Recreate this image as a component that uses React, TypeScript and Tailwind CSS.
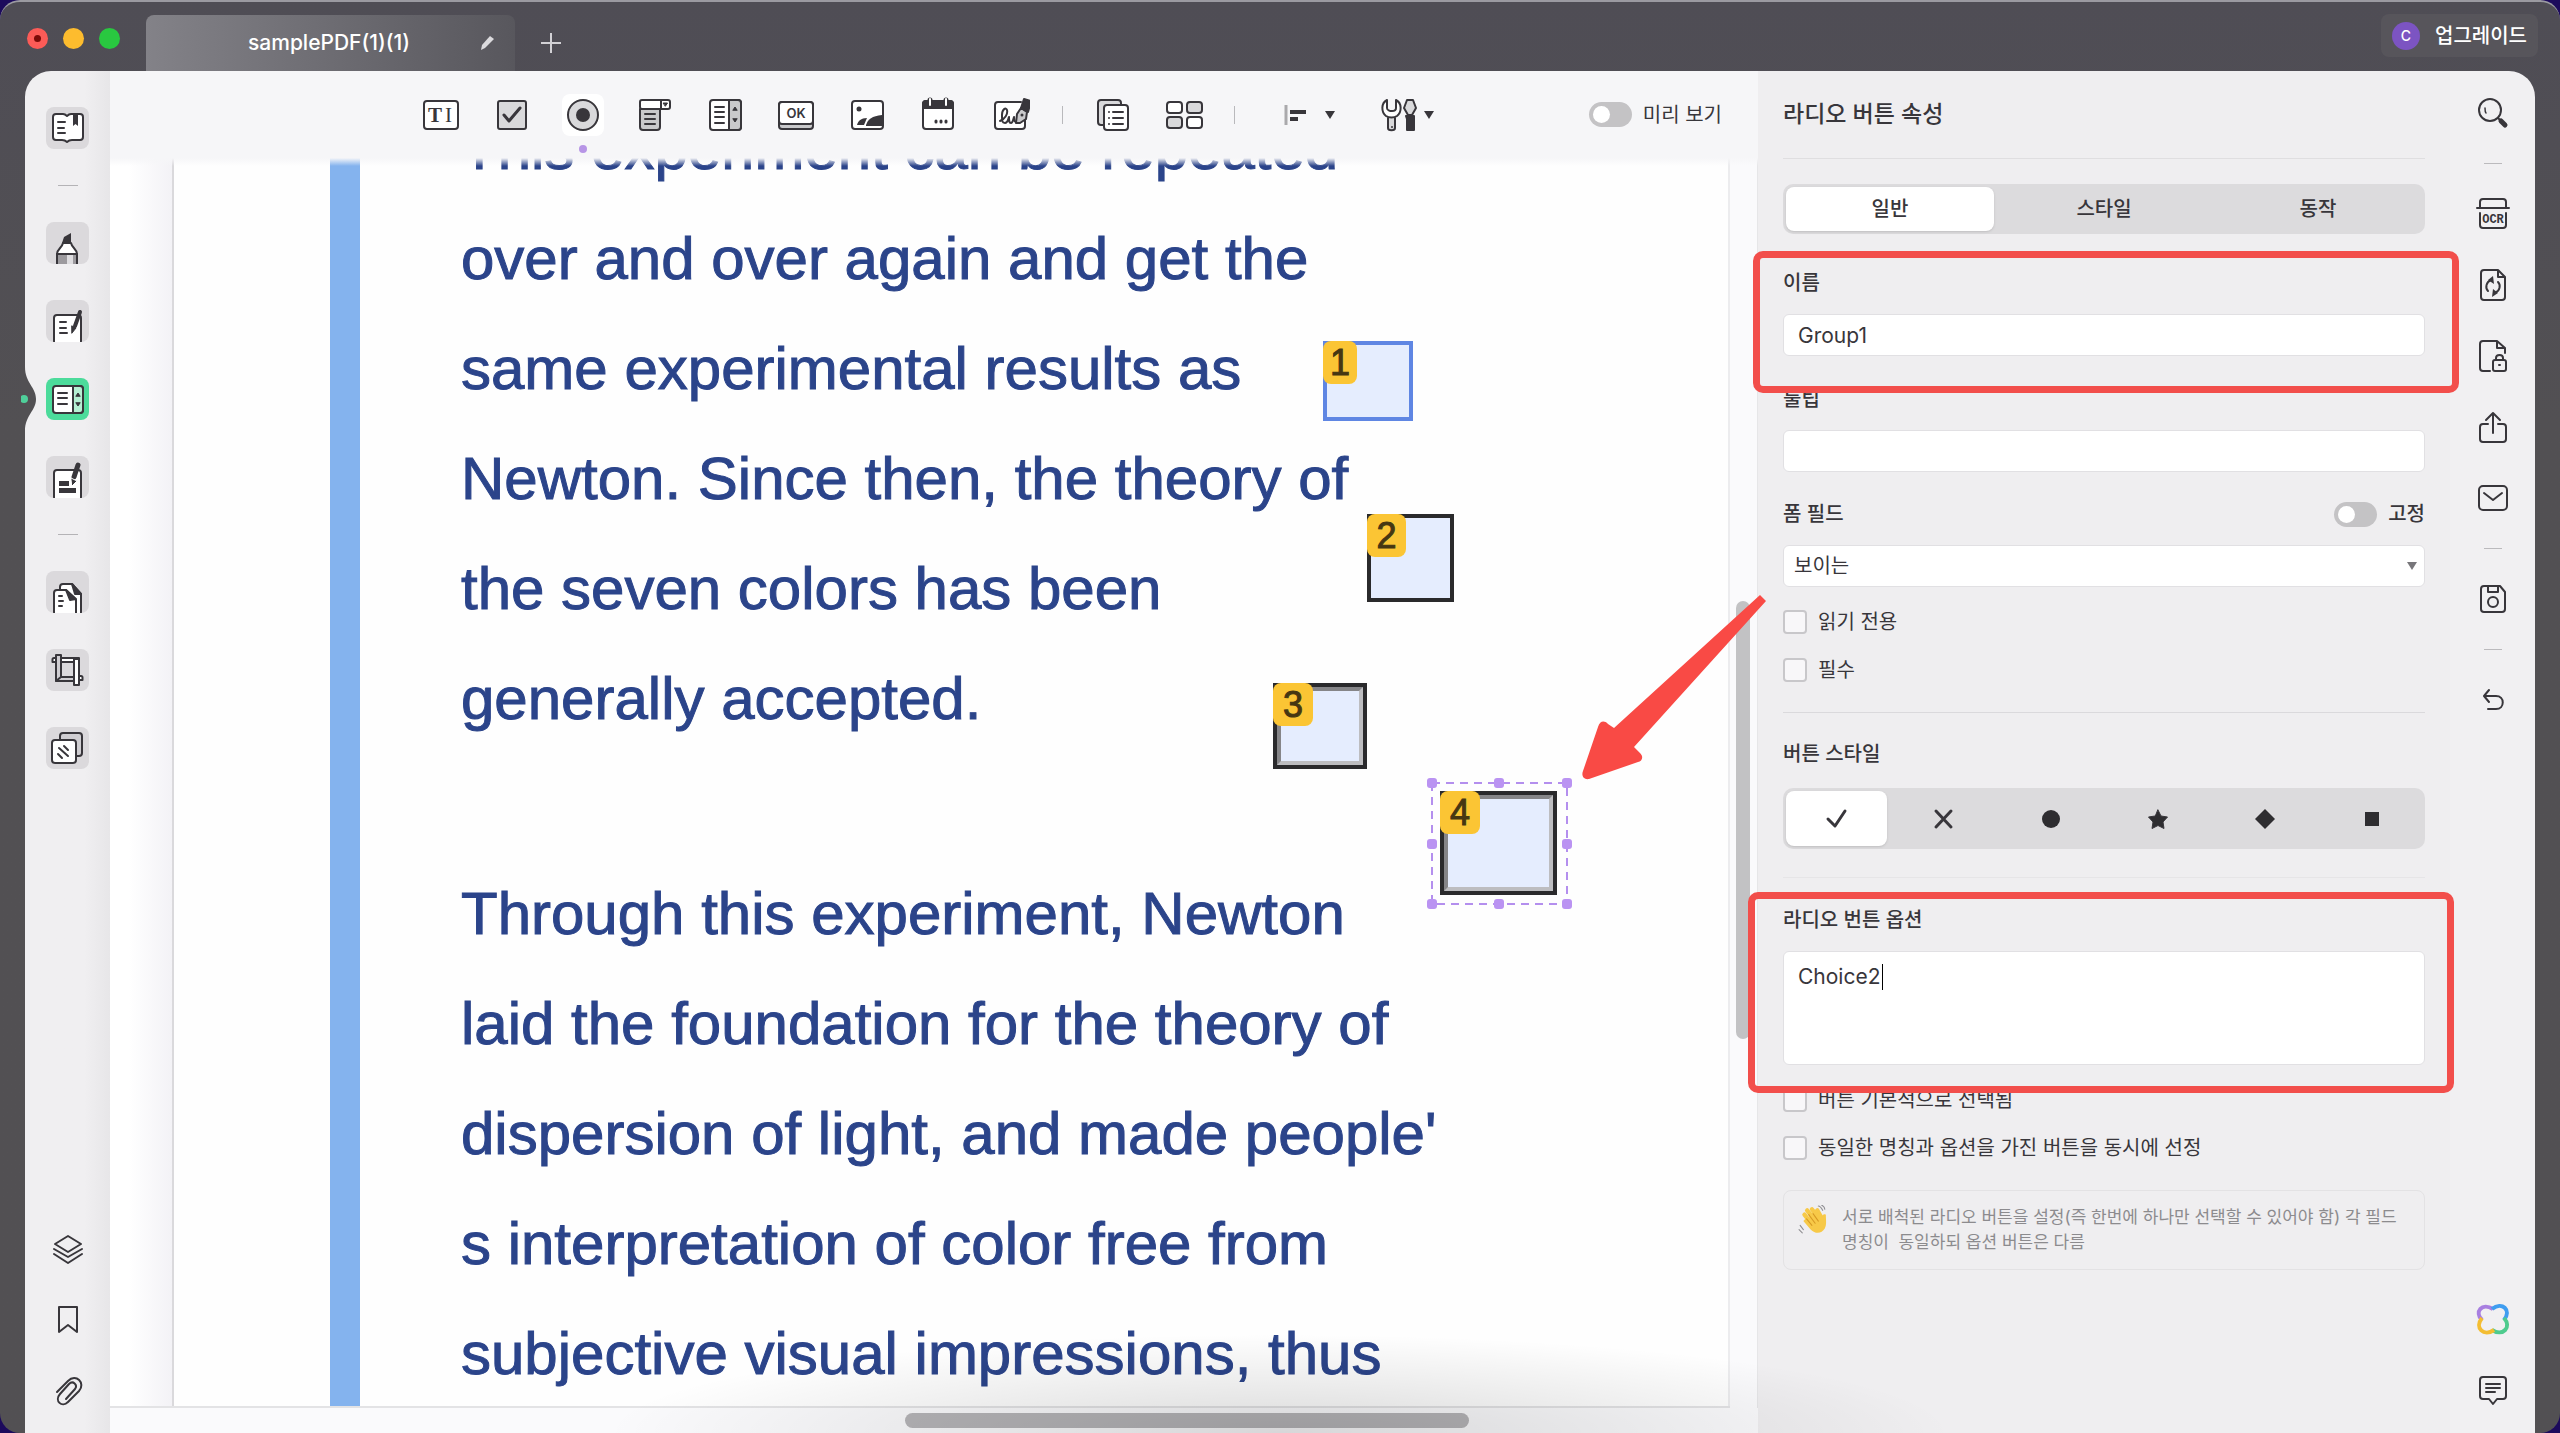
import { useState } from "react";
import type { ReactNode } from "react";

const INK = "#38363b";

const paragraphs = [
  ["This experiment can be repeated", "over and over again and get the", "same experimental results as", "Newton. Since then, the theory of", "the seven colors has been", "generally accepted."],
  ["Through this experiment, Newton", "laid the foundation for the theory of", "dispersion of light, and made people'", "s interpretation of color free from", "subjective visual impressions, thus"],
];

const tabs = ["일반", "스타일", "동작"];

function Icon({ children, size = 42, box = 42 }: { children: ReactNode; size?: number; box?: number }) {
  return <svg width={size} height={size} viewBox={`0 0 ${box} ${box}`} fill="none" stroke={INK} strokeWidth="2" strokeLinecap="round" strokeLinejoin="round" className="shrink-0" aria-hidden="true">{children}</svg>;
}

/* form toolbar */

const tools: { name: string; icon: ReactNode }[] = [
  { name: "Text field", icon: <><rect x="4" y="7" width="34" height="28" rx="3" fill="#fff" /><text x="8" y="28" fontFamily="Liberation Serif, serif" fontWeight="700" fontSize="21" fill={INK} stroke="none">T</text><text x="25" y="28" fontFamily="Liberation Serif, serif" fontSize="21" fill={INK} stroke="none">I</text></> },
  { name: "Check box", icon: <><rect x="7" y="7" width="28" height="28" rx="2" fill="#d9d9db" /><path d="M13 21l5 6 11-13" strokeWidth="3" /></> },
  { name: "Radio button", icon: <><circle cx="21" cy="21" r="15" fill="#d9d9db" /><circle cx="21" cy="21" r="7" fill={INK} stroke="none" /></> },
  { name: "Combo box", icon: <><path d="M7 15h20v18a3 3 0 0 1-3 3H10a3 3 0 0 1-3-3z" fill="#c9c9cb" /><rect x="7" y="6" width="30" height="9" rx="2" fill="#fff" /><path d="M28 6v9M12 20h10M12 25h10M12 30h10" /><path d="M30.500 9h4l-2 3z" fill={INK} strokeWidth="1" /></> },
  { name: "List box", icon: <><rect x="6" y="6" width="31" height="30" rx="3" fill="#fff" /><path d="M25 6h9a3 3 0 0 1 3 3v24a3 3 0 0 1-3 3h-9z" fill="#c9c9cb" /><path d="M11 13h9M11 18h9M11 23h9M11 29h9" /><path d="M29 16l2-3 2 3zM29 25l2 3 2-3z" fill={INK} strokeWidth="1" /></> },
  { name: "Push button", icon: <><rect x="4" y="8" width="34" height="27" rx="3" fill="#c9c9cb" /><path d="M4 11a3 3 0 0 1 3-3h28a3 3 0 0 1 3 3v16a3 3 0 0 1-3 3H7a3 3 0 0 1-3-3z" fill="#fff" /><text x="21" y="24" textAnchor="middle" fontFamily="Inter, sans-serif" fontWeight="600" fontSize="13" fill={INK} stroke="none">OK</text></> },
  { name: "Image field", icon: <><rect x="6" y="7" width="31" height="28" rx="3" fill="#fff" /><circle cx="13" cy="15" r="2.500" fill={INK} stroke="none" /><path d="M11 31c1-4 4-7 10-7l-3 7z" fill={INK} stroke="none" /><path d="M20 31c2-6 6-9 16-10v11H20z" fill={INK} stroke="none" /></> },
  { name: "Date field", icon: <><rect x="6" y="7" width="30" height="28" rx="3" fill="#fff" /><path d="M6 10a3 3 0 0 1 3-3h24a3 3 0 0 1 3 3v4H6z" fill={INK} /><path d="M13 6v5M29 6v5" strokeWidth="5" /><path d="M13 5v6M29 5v6" stroke="#fff" strokeWidth="2" /><path d="M19 27v1M24 27v1M29 27v1" strokeWidth="3" /></> },
  { name: "Signature field", icon: <><path d="M33 8H10a3 3 0 0 0-3 3v21a3 3 0 0 0 3 3h24a3 3 0 0 0 3-3v-9" fill="#fff" /><path d="M12 27c5-2 8-7 7-11-1-3-5-1-5 5s0 8 3 8 3-4 4-6c0 4 0 6 2 6s2-3 3-6c0 4 1 6 4 6" /><path d="M28 29l1-9 4-6 6 4-1 7-6 4z" fill="#c9c9cb" /><path d="M33 14l3-9 7 2-3 11z" fill={INK} /><circle cx="34" cy="21" r="1.500" fill={INK} stroke="none" /></> },
];

const groupTools: { name: string; icon: ReactNode }[] = [
  { name: "Duplicate", icon: <><rect x="6" y="6" width="23" height="25" rx="3" fill="#d9d9db" /><rect x="12" y="11" width="24" height="25" rx="3" fill="#fff" /><path d="M21 18h10M21 24h10M21 30h10M17 18h0M17 24h0M17 30h0" /></> },
  { name: "Distribute", icon: <><rect x="4" y="8" width="15" height="11" rx="3" fill="#fff" /><rect x="24" y="8" width="15" height="11" rx="3" fill="#d9d9db" /><rect x="4" y="23" width="15" height="11" rx="3" fill="#d9d9db" /><rect x="24" y="23" width="15" height="11" rx="3" fill="#fff" /></> },
];

/* left rail */

const bookIcon = <><path d="M7 10a3 3 0 0 1 3-3h7c2 0 3 1 4 2 1-1 2-2 4-2h9a3 3 0 0 1 3 3v20a3 3 0 0 1-3 3h-8c-2 0-3 0-5 2-2-2-3-2-5-2h-6a3 3 0 0 1-3-3z" fill="#fff" /><path d="M12 15h7M12 21h6M12 26h7" /><path d="M27 7h5v12l-2.500-2-2.500 2z" fill={INK} stroke="none" /></>;
const highlightIcon = <><path d="M16 21l2-6 7-4v10z" fill={INK} stroke="none" /><path d="M17 21h8c1 5 6 6 6 11v12H11V32c0-5 5-6 6-11z" fill="#fff" /><path d="M11 32h20v12H11z" fill="#9c9a9e" /><path d="M21 33h6v11h-6z" fill="#dedde0" stroke="none" /></>;
const noteIcon = <><path d="M8 44V18a3 3 0 0 1 3-3h21a3 3 0 0 1 3 3v26" fill="#fff" /><path d="M14 22h6M14 28h6M14 33h7" /><path d="M34 12l-5 14" strokeWidth="4" /><path d="M26 26l4 2-4 5z" fill={INK} strokeWidth="1" /></>;
const formIcon = <><rect x="7" y="8" width="30" height="27" rx="3" fill="#fff" /><path d="M27 8h7a3 3 0 0 1 3 3v21a3 3 0 0 1-3 3h-7z" fill="#b5efd3" /><path d="M12 15h9M12 20h9M12 26h9" /><path d="M30 18l2-3 2 3zM30 25l2 3 2-3z" fill={INK} strokeWidth="1" /></>;
const redactIcon = <><path d="M8 44V17a3 3 0 0 1 3-3h21a3 3 0 0 1 3 3v27" fill="#fff" /><path d="M13 25h10v5H13zM13 32h17v5H13z" fill={INK} stroke="none" /><path d="M32 9l-4 12" strokeWidth="5" /><path d="M25 22l6 3-5 5z" fill={INK} stroke="#fff" strokeWidth="1" /></>;
const pagesIcon = <><path d="M14 19v-3a3 3 0 0 1 3-3h9l9 10v21H14z" fill="#fff" /><path d="M26 13l9 10h-6z" fill={INK} /><path d="M8 44V22a3 3 0 0 1 3-3h9l10 10v15" fill="#fff" /><path d="M20 19l10 9-6 1z" fill={INK} /><path d="M13 25h3M13 30h4M13 35h3" /></>;
const cropIcon = <><path d="M10 9H8a1.500 1.500 0 0 0-1.500 1.500v2.500H10M32 27h3a1.500 1.500 0 0 1 1.500 1.500V31H32" fill="#fff" /><path d="M15 9h18v4H15z" fill="#fff" /><path d="M10 28h18v4H10z" fill="#d0ced2" /><path d="M28 10h5v26h-5z" fill="#fff" /><path d="M10 6h5v22l-5 4z" fill="#d0ced2" /></>;
const watermarkIcon = <><rect x="14" y="6" width="22" height="23" rx="3" fill="#d0ced2" /><rect x="6" y="13" width="24" height="23" rx="3" fill="#fff" /><path d="M13 21l9 8M18 19l4 4M12 27l4 4" strokeWidth="2" /></>;

const railTop = [{ name: "Reader", icon: bookIcon }];
const railEdit = [
  { name: "Highlight", icon: highlightIcon },
  { name: "Notes", icon: noteIcon },
  { name: "Forms", icon: formIcon },
  { name: "Redact", icon: redactIcon },
];
const railPages = [
  { name: "Organize pages", icon: pagesIcon },
  { name: "Crop", icon: cropIcon },
  { name: "Watermark", icon: watermarkIcon },
];
const railBottom = [
  { name: "Layers", icon: <><path d="M21 7l13 8-13 8-13-8z" /><path d="M7 20l14 8 14-8M7 25l14 9 14-9" /></> },
  { name: "Bookmarks", icon: <path d="M12 7h18v25l-9-7-9 7z" /> },
  { name: "Attachments", icon: <path d="M10 21l11-11c8-8 18 2 11 10L21 31c-6 6-14-1-8-8l9-10c4-4 9 1 6 5l-9 10" /> },
];

/* right rail */

const rightGroups: { name: string; icon: ReactNode }[][] = [
  [{ name: "Search", icon: <><circle cx="18" cy="18" r="11" /><path d="M13 16c0 2 0 4 1 5" strokeWidth="1.500" /><path d="M26 26l3 3" /><path d="M29 29l4 4" strokeWidth="5" /></> }],
  [
    { name: "OCR", icon: <><path d="M8 15V9a3 3 0 0 1 3-3h20a3 3 0 0 1 3 3v6M5 15h32M8 20v12a3 3 0 0 0 3 3h20a3 3 0 0 0 3-3V20" /><text x="21" y="30" textAnchor="middle" fontFamily="Liberation Mono, monospace" fontWeight="700" fontSize="12" fill={INK} stroke="none">OCR</text></> },
    { name: "Convert", icon: <><path d="M26 6H12a3 3 0 0 0-3 3v24a3 3 0 0 0 3 3h18a3 3 0 0 0 3-3V13zM26 6v7h7" /><path d="M16 27c-3-3-2-9 3-11M26 18c3 3 2 9-3 11" /><path d="M21 12l-5 4 6 4zM21 25l5 4-6 4z" fill={INK} stroke="none" /></> },
    { name: "Protect", icon: <><path d="M18 36h-7a3 3 0 0 1-3-3V9a3 3 0 0 1 3-3h14l8 7v5M25 6v7h8" /><rect x="21" y="25" width="13" height="11" rx="2" /><path d="M24 25v-2c0-4 7-4 7 0v2M27 30h1" /></> },
    { name: "Share", icon: <><path d="M16 18h-5a3 3 0 0 0-3 3v12a3 3 0 0 0 3 3h20a3 3 0 0 0 3-3V21a3 3 0 0 0-3-3h-5" /><path d="M21 27V7M14 14l7-7 7 7" /></> },
    { name: "Email", icon: <><rect x="7" y="9" width="28" height="24" rx="4" /><path d="M12 16l9 7 9-7" /></> },
  ],
  [{ name: "Save", icon: <><path d="M12 8h16l5 6v17a3 3 0 0 1-3 3H12a3 3 0 0 1-3-3V11a3 3 0 0 1 3-3z" /><path d="M16 8v6h10V8" /><circle cx="21" cy="24" r="5" /></> }],
  [{ name: "Undo", icon: <><path d="M16 30h8c9 0 9-13 0-13H13" /><path d="M17 11l-5 6 5 6" /></> }],
];

const markers = [
  { n: "1", box: "left-[1213px] top-[183px] w-[90px] h-[80px] border-[#5f86e3]", badge: "w-[34px]", bevel: false },
  { n: "2", box: "left-[1257px] top-[356px] w-[87px] h-[88px] border-[#2a2a2c]", badge: "w-[39px]", bevel: false },
  { n: "3", box: "left-[1163px] top-[525px] w-[94px] h-[86px] border-[#2a2a2c]", badge: "w-[40px]", bevel: true },
  { n: "4", box: "left-[1330px] top-[633px] w-[117px] h-[104px] border-[#2a2a2c]", badge: "w-[40px]", bevel: true },
];

const buttonStyles: { name: string; icon: ReactNode }[] = [
  { name: "Check", icon: <path d="M6 15l7 7L23 7" strokeWidth="3" /> },
  { name: "Cross", icon: <path d="M7 7l15 16M22 7L7 23" strokeWidth="3" /> },
  { name: "Circle", icon: <circle cx="15" cy="15" r="9" fill="#2e2d30" stroke="none" /> },
  { name: "Star", icon: <path d="M15 6l3 6 6.500 1-4.500 5 1 6.500-6-3-6 3 1-6.500-4.500-5L12 12z" fill="#2e2d30" strokeWidth="1" /> },
  { name: "Diamond", icon: <path d="M15 5l10 10-10 10L5 15z" fill="#2e2d30" stroke="none" /> },
  { name: "Square", icon: <path d="M8 8h14v14H8z" fill="#2e2d30" stroke="none" /> },
];

function Caret() {
  return <svg width="10" height="8" viewBox="0 0 10 8" aria-hidden="true"><path d="M0 0h10L5 8z" fill={INK} /></svg>;
}

function RailItem({ name, icon }: { name: string; icon: ReactNode }) {
  const active = name === "Forms";
  return <button aria-label={name} className={active ? "h-[42px] w-[43px] overflow-hidden rounded-lg bg-[#4cdb9b]" : "h-[42px] w-[43px] overflow-hidden rounded-lg bg-[#dbd9dc]"}><Icon>{icon}</Icon></button>;
}

function RailLine() {
  return <hr className="w-5 border-[#b4b3b6]" />;
}

function LeftRail() {
  return <nav aria-label="Tools" className="relative flex w-[85px] shrink-0 flex-col items-center gap-9 rounded-tl-[26px] bg-linear-to-r from-[#f0eff1] from-70% to-[#e7e6e8] pt-9">
    {railTop.map((item) => <RailItem key={item.name} {...item} />)}
    <RailLine />
    {railEdit.map((item) => <RailItem key={item.name} {...item} />)}
    <RailLine />
    {railPages.map((item) => <RailItem key={item.name} {...item} />)}
    <div className="mt-auto flex flex-col gap-[29px] pb-5">
      {railBottom.map((item) => <button key={item.name} aria-label={item.name} className="size-[42px]"><Icon>{item.icon}</Icon></button>)}
    </div>
    <svg width="16" height="64" viewBox="0 0 16 64" className="absolute -left-1 top-[296px]" aria-hidden="true">
      <path d="M0 0h4c0 16 11 20 11 32S4 48 4 64H0z" fill="#525053" />
      <circle cx="3" cy="32" r="4" fill="#4fcf9a" />
    </svg>
  </nav>;
}

function Toolbar() {
  return <div className="flex h-[87px] shrink-0 items-center bg-[#f6f6f8] pl-[310px] pr-9">
    <div className="flex gap-[29px]">
      {tools.map((tool) => <button key={tool.name} aria-label={tool.name} className={tool.name === "Radio button" ? "relative rounded-lg bg-white" : "relative"}>
        <Icon>{tool.icon}</Icon>
        {tool.name === "Radio button" && <span className="absolute left-[17px] top-[51px] size-2 rounded-full bg-[#b795e6]" />}
      </button>)}
    </div>
    <span className="ml-8 mr-[29px] h-[18px] w-px bg-[#b9b9bc]" />
    <div className="flex gap-[29px]">
      {groupTools.map((tool) => <button key={tool.name} aria-label={tool.name}><Icon>{tool.icon}</Icon></button>)}
    </div>
    <span className="ml-[29px] mr-11 h-[18px] w-px bg-[#b9b9bc]" />
    <button aria-label="Align" className="flex items-center gap-1">
      <Icon><path d="M7 11v20" stroke="#aaa9ac" strokeWidth="3" strokeLinecap="butt" /><path d="M11 18h16M11 25h8" strokeWidth="4" strokeLinecap="butt" /></Icon>
      <Caret />
    </button>
    <button aria-label="Form settings" className="ml-[41px] flex items-center gap-[6px]">
      <Icon>
        <path d="M12 24v10c0 3 7 3 7 0V24" fill="#d9d9db" />
        <path d="M11 6c-6 3-6 12-1 16 3 2 8 2 11 0 5-4 5-13-1-16v8c0 2-2 3-4 3s-5-1-5-3z" fill="#fff" />
        <path d="M31 6h6l3 8-4 7h-4l-4-7z" fill="#d9d9db" />
        <path d="M30 22h8v14h-7V25z" fill={INK} />
        <path d="M16 33v0" />
      </Icon>
      <Caret />
    </button>
    <label className="ml-auto flex items-center gap-[11px] text-[20px] leading-7">
      <Switch /> 미리 보기
    </label>
  </div>;
}

function Switch() {
  return <input type="checkbox" role="switch" className="relative h-[25px] w-[43px] shrink-0 appearance-none rounded-full bg-[#c4c3c5] before:absolute before:left-1 before:top-1 before:size-[17px] before:rounded-full before:bg-white checked:bg-[#b795e6] checked:before:left-[22px]" />;
}

function Selection() {
  return <div className="absolute -left-3 -top-3 h-[121px] w-[135px]">
    <svg width="135" height="121" viewBox="0 0 135 121" overflow="visible" aria-hidden="true">
      <rect x="0" y="0" width="135" height="121" fill="none" stroke="#b48fee" strokeWidth="2" strokeDasharray="8 6" />
      {[[0, 0], [67, 0], [135, 0], [0, 61], [135, 61], [0, 121], [67, 121], [135, 121]].map(([x, y]) => <rect key={`${x}-${y}`} x={x - 5} y={y - 5} width="10" height="10" rx="3" fill="#ba93f2" />)}
    </svg>
  </div>;
}

function Document() {
  return <div className="flex min-h-0 flex-1 flex-col bg-[#fafafc]">
    <div className="relative flex min-h-0 flex-1">
      <div className="flex min-w-0 flex-1 overflow-hidden border-b-2 border-[#e3e3e5]">
        <div className="w-16 shrink-0 border-r-2 border-[#dad9dc] bg-linear-to-r from-white from-30% to-[#f3f2f6]" />
        <div className="flex min-w-0 flex-1 border-r-2 border-[#ececee] bg-[#fefefe]">
          <div className="ml-[156px] w-[30px] shrink-0 bg-[#84b3ee]" />
          <article className="-mt-16 ml-[101px] flex flex-col gap-[105px] whitespace-nowrap font-['Liberation_Sans',sans-serif] text-[60px] leading-[110px] text-[#2b448a] [-webkit-text-stroke:1px_#2b448a]">
            {paragraphs.map((lines) => <p key={lines[0]}>{lines.map((line) => <span key={line} className="block">{line}</span>)}</p>)}
          </article>
        </div>
      </div>
      <div className="w-7 shrink-0 border-r border-[#e6e6e8] px-[6px] pt-[443px]">
        <div className="h-[438px] w-[14px] rounded-full bg-[#c2c2c4]" />
      </div>
      <div className="absolute inset-x-0 top-0 h-2 bg-linear-to-b from-[#f6f6f8] to-transparent" />
      {markers.map((m) => <button key={m.n} className={`absolute border-4 bg-[#e5edfe] ${m.box}`}>
        {m.bevel && <span className="absolute inset-0 border-4 border-b-[#bdbdc0] border-l-[#858588] border-r-[#bdbdc0] border-t-[#858588]" />}
        <span className={`absolute -left-1 -top-1 flex h-[43px] items-center justify-center rounded-lg bg-[#fbc534] font-['Liberation_Sans',sans-serif] text-[36px] leading-[43px] text-[#463712] [-webkit-text-stroke:1px_#463712] ${m.badge}`}>{m.n}</span>
        {m.n === "4" && <Selection />}
      </button>)}
    </div>
    <div className="h-[25px] shrink-0 px-[795px] pt-[5px]">
      <div className="h-[15px] w-[564px] rounded-full bg-[#b6b5b8]" />
    </div>
  </div>;
}

function Label({ id, children }: { id: string; children: string }) {
  return <label htmlFor={id} className="block text-[20px] font-medium leading-[30px]">{children}</label>;
}

function Check({ children }: { children: string }) {
  return <label className="flex h-6 items-center gap-[11px] text-[20px] leading-6"><input type="checkbox" className="size-6 shrink-0 appearance-none rounded border-2 border-[#c8c7ca] bg-[#f8f7f9] checked:bg-[#b795e6]" />{children}</label>;
}

function Wave() {
  return <svg width="30" height="30" viewBox="0 0 28 28" fill="none" strokeLinecap="round" className="shrink-0" aria-hidden="true">
    <path d="M6 9l8 10M8.500 5l8 10M13 4l7 9M18 5l4 7" stroke="#f7c948" strokeWidth="4" />
    <path d="M5 15l7 8c4 4 10 4 13-1 2-4 1-8 1-13-3-1-4 1-4 5l-4-4-10 2z" fill="#f7c948" />
    <path d="M10 9l6 8M14 8l5 7M8 13l5 6" stroke="#d79a24" strokeWidth="1" />
    <path d="M2 19l3 4M1 23l3 3M19 1c2 0 3 2 4 4M22 0c2 1 3 2 3 4" stroke="#8f8e92" strokeWidth="1" />
  </svg>;
}

function Properties() {
  const [tab, setTab] = useState("일반");
  const [style, setStyle] = useState("Check");
  const [name, setName] = useState("Group1");
  const [option, setOption] = useState("Choice2");
  const field = "w-full rounded-[6px] border border-[#e1e0e3] bg-white";

  return <aside className="relative w-[692px] shrink-0 bg-[#efeef0] px-[25px]">
    <h2 className="flex h-[88px] items-center border-b border-[#dfdee0] text-[23px] font-medium">라디오 버튼 속성</h2>
    <div className="mt-[25px] flex h-[50px] rounded-[10px] bg-[#dcdbdd]">
      {tabs.map((t) => <button key={t} onClick={() => setTab(t)} className={t === tab ? "m-[3px] flex-1 rounded-lg bg-white text-[20px] font-medium shadow" : "m-[3px] flex-1 text-[20px] font-medium"}>{t}</button>)}
    </div>

    <div className="mt-[34px] flex flex-col gap-4"><Label id="name">이름</Label><input id="name" value={name} onChange={(e) => setName(e.target.value)} className={`${field} h-[42px] px-[14px] text-[21px]`} /></div>
    <div className="mt-7 flex flex-col gap-4"><Label id="tooltip">툴팁</Label><input id="tooltip" className={`${field} h-[42px] px-[14px] text-[21px]`} /></div>

    <div className="mt-[27px] flex flex-col gap-4">
      <div className="flex items-center justify-between">
        <Label id="visibility">폼 필드</Label>
        <label className="flex items-center gap-[11px] text-[20px] font-medium leading-[30px]"><Switch /> 고정</label>
      </div>
      <div className="relative">
        <select id="visibility" className={`${field} block h-[42px] appearance-none px-[10px] text-[20px]`}><option>보이는</option></select>
        <svg width="10" height="8" viewBox="0 0 10 8" className="pointer-events-none absolute right-2 top-[17px]" aria-hidden="true"><path d="M0 0h10L5 8z" fill="#77767a" /></svg>
      </div>
    </div>
    <div className="mt-[23px] flex flex-col gap-6">
      <Check>읽기 전용</Check>
      <Check>필수</Check>
    </div>

    <hr className="mt-[30px] border-[#dad9dc]" />
    <h3 className="mt-[26px] text-[20px] font-medium leading-[30px]">버튼 스타일</h3>
    <div className="mt-[19px] flex h-[61px] rounded-[10px] bg-[#dcdbdd]">
      {buttonStyles.map((b) => <button key={b.name} aria-label={b.name} onClick={() => setStyle(b.name)} className={b.name === style ? "m-[3px] flex flex-1 items-center justify-center rounded-lg bg-white shadow" : "m-[3px] flex flex-1 items-center justify-center"}><Icon size={30} box={30}>{b.icon}</Icon></button>)}
    </div>

    <hr className="mt-7 border-[#e6e5e7]" />
    <div className="mt-[27px] flex flex-col gap-4">
      <Label id="option">라디오 번튼 옵션</Label>
      <div className="relative">
        <textarea id="option" value={option} onChange={(e) => setOption(e.target.value)} className={`${field} block h-[114px] resize-none px-[14px] py-[11px] text-[21px] leading-7 caret-transparent`} />
        <span className="absolute left-[99px] top-[13px] h-[26px] w-px bg-black" />
      </div>
    </div>
    <div className="mt-[23px] flex flex-col gap-6">
      <Check>버튼 기본적으로 선택됨</Check>
      <Check>동일한 명칭과 옵션을 가진 버튼을 동시에 선정</Check>
    </div>
    <div className="mt-[30px] flex gap-[14px] rounded-lg border border-[#e3e2e4] px-[14px] py-[14px]">
      <Wave />
      <p className="whitespace-pre text-[17px] leading-[25px] text-[#8c8b8e]">{"서로 배척된 라디오 버튼을 설정(즉 한번에 하나만 선택할 수 있어야 함) 각 필드\n명칭이  동일하되 옵션 버튼은 다름"}</p>
    </div>

    <div className="pointer-events-none absolute -left-[5px] top-[180px] h-[142px] w-[706px] rounded-[10px] border-[7px] border-[#f24e4b]" />
    <div className="pointer-events-none absolute -left-[10px] top-[821px] h-[201px] w-[706px] rounded-[10px] border-[7px] border-[#f24e4b]" />
    <svg width="186" height="188" viewBox="0 0 186 188" className="pointer-events-none absolute -left-[177px] top-[522px]" aria-hidden="true">
      <path d="M179 2l6 6L53 154l6 6c4 4 2 8-2 9L8 186c-5 1-8-3-6-8l15-44c2-6 6-7 10-3l6 4z" fill="#f94a45" />
    </svg>
  </aside>;
}

function RightRail() {
  return <nav aria-label="Actions" className="flex w-[85px] shrink-0 flex-col items-center gap-[29px] rounded-tr-[26px] bg-[#f1f0f2] pt-[21px]">
    {rightGroups.map((group, i) => <div key={group[0].name} className="flex flex-col items-center gap-[29px]">
      {i > 0 && <hr className="w-[18px] border-[#bbbabd]" />}
      {group.map((item) => <button key={item.name} aria-label={item.name}><Icon>{item.icon}</Icon></button>)}
    </div>)}
    <div className="mt-auto flex flex-col gap-[29px] pb-[22px]">
      <button aria-label="AI assistant">
        <Icon>
          <g strokeWidth="4" strokeLinecap="butt">
            <path d="M10 22C2 14 10 4 21 11" stroke="#a87fe0" />
            <path d="M20 11C30 3 40 12 32 22" stroke="#3f9df0" />
            <path d="M32 20c8 9-1 19-12 12" stroke="#4fcb8e" />
            <path d="M22 32C12 39 2 30 10 20" stroke="#f3bd33" />
          </g>
        </Icon>
      </button>
      <button aria-label="Comments"><Icon><path d="M11 8h20a3 3 0 0 1 3 3v16a3 3 0 0 1-3 3h-6l-4 5-4-5h-6a3 3 0 0 1-3-3V11a3 3 0 0 1 3-3z" /><path d="M14 15h14M14 19h14M14 23h9" /></Icon></button>
    </div>
  </nav>;
}

function TitleBar() {
  return <header className="flex h-[69px] shrink-0 items-end justify-between pl-[27px] pr-[22px]">
    <div className="flex items-end">
      <div className="mb-[22px] flex gap-[15px]">
        <button aria-label="Close" className="flex size-[21px] items-center justify-center rounded-full bg-[#fc5b57]"><span className="size-[7px] rounded-full bg-[#7c0b08]" /></button>
        <button aria-label="Minimize" className="size-[21px] rounded-full bg-[#fdbc2e]" />
        <button aria-label="Zoom" className="size-[21px] rounded-full bg-[#29c840]" />
      </div>
      <div className="ml-[26px] flex h-14 w-[369px] items-center rounded-t-lg bg-linear-to-r from-[#838288] to-[#58575d] pl-[102px] text-[21px] font-medium text-white">
        samplePDF(1)(1)
        <button aria-label="Rename" className="ml-auto mr-5"><svg width="16" height="16" viewBox="0 0 16 16" aria-hidden="true"><path d="M11 1l4 3-9 9-4 2 1-5z" fill="#dcdbde" /></svg></button>
      </div>
      <button aria-label="New tab" className="mb-[18px] ml-[26px]"><svg width="20" height="20" viewBox="0 0 20 20" stroke="#d2d1d5" strokeWidth="2" aria-hidden="true"><path d="M10 0v20M0 10h20" /></svg></button>
    </div>
    <button className="mb-[14px] flex h-[43px] items-center gap-[15px] rounded-lg bg-[#57555b] px-[11px] text-[20px] font-medium text-white">
      <span className="flex size-7 items-center justify-center rounded-full bg-[#7c54c2] text-[14px]">C</span>
      업그레이드
    </button>
  </header>;
}

export default function App() {
  return <div className="h-screen bg-[#1c0a5c] font-['Inter','Noto_Sans_CJK_KR',sans-serif] text-[#38363b]">
    <div className="relative flex h-full flex-col overflow-hidden rounded-[20px] border-t-2 border-[#9b9aa1] bg-linear-to-b from-[#4f4d55] to-[#525053] to-30%">
      <TitleBar />
      <div className="flex min-h-0 flex-1 px-[25px]">
        <LeftRail />
        <main className="flex min-w-0 flex-1 flex-col">
          <Toolbar />
          <Document />
        </main>
        <Properties />
        <RightRail />
      </div>
      <div className="pointer-events-none absolute bottom-0 left-[600px] right-[600px] h-[100px] bg-[radial-gradient(ellipse_at_bottom,rgba(0,0,0,0.14),transparent_70%)]" />
    </div>
  </div>;
}
